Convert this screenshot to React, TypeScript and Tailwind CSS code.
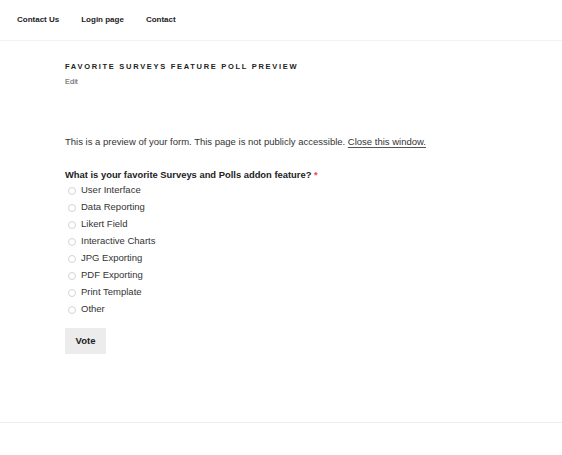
const options = [
  "User Interface",
  "Data Reporting",
  "Likert Field",
  "Interactive Charts",
  "JPG Exporting",
  "PDF Exporting",
  "Print Template",
  "Other",
]

export default function App() {
  return (
    <div className="w-[562px] h-[455px] bg-white text-[#222] font-['Liberation_Sans',sans-serif] flex flex-col">
      {/* Nav */}
      <nav className="h-[41px] border-b border-[#f1f4f5] flex items-center gap-[22px] pl-[17px] text-[8px] font-bold text-[#222]">
        <span>Contact Us</span>
        <span>Login page</span>
        <span>Contact</span>
      </nav>

      {/* Content */}
      <main className="pl-[65px] pt-[21px] flex-1">
        <h1 className="text-[7.5px] font-bold tracking-[1.7px] uppercase leading-[9px]">
          Favorite Surveys Feature Poll Preview
        </h1>
        <div className="text-[7.5px] text-[#555] mt-[6px] leading-[9px]">Edit</div>

        <p className="text-[9.5px] text-[#333] mt-[50px] leading-[12px]">
          This is a preview of your form. This page is not publicly accessible.{" "}
          <span className="underline underline-offset-2 decoration-[#555]">Close this window.</span>
        </p>

        <div className="mt-[21px] text-[9.4px] font-bold leading-[12px]">
          What is your favorite Surveys and Polls addon feature? <span className="text-[#e34c4c]">*</span>
        </div>

        <ul className="mt-[1px] flex flex-col">
          {options.map((o) => (
            <li key={o} className="h-[17px] flex items-center text-[9.5px] text-[#333]">
              <span className="ml-[3px] w-[8px] h-[8px] rounded-full border border-[#d4d4d4] bg-white mr-[5px]" />
              {o}
            </li>
          ))}
        </ul>

        <button className="mt-[10px] w-[41px] h-[26px] bg-[#ececec] text-[9.5px] font-bold text-[#222]">
          Vote
        </button>
      </main>

      <div className="h-[33px] border-t border-[#eee]" />
    </div>
  )
}
